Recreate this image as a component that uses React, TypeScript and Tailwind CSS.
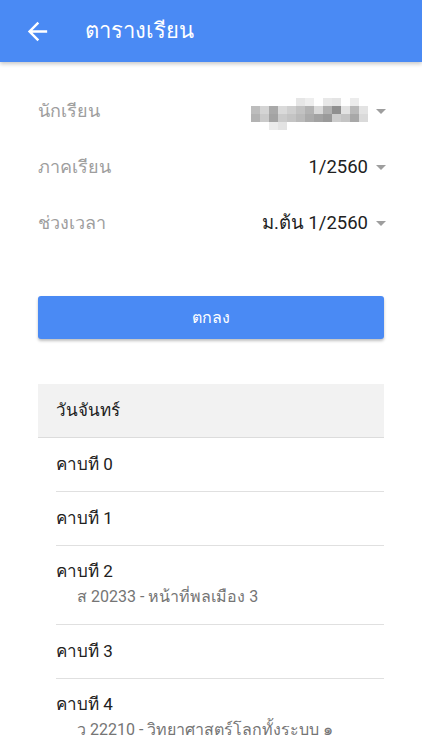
const mosaic: string[] = [
  "bg-white", "bg-white", "bg-white", "bg-white", "bg-white", "bg-[#e6e6e6]", "bg-[#eeeeee]", "bg-white", "bg-[#e8e8e8]", "bg-[#e4e4e4]", "bg-white", "bg-[#ececec]", "bg-white",
  "bg-[#bdbdbd]", "bg-[#d4d4d4]", "bg-[#a9a9a9]", "bg-[#dadada]", "bg-[#cfcfcf]", "bg-[#c2c2c2]", "bg-[#b3b3b3]", "bg-[#d9d9d9]", "bg-[#b0b0b0]", "bg-[#8f8f8f]", "bg-[#e2e2e2]", "bg-[#b9b9b9]", "bg-[#e3e3e3]",
  "bg-[#b3b3b3]", "bg-[#cacaca]", "bg-[#a3a3a3]", "bg-[#cbcbcb]", "bg-[#c4c4c4]", "bg-[#bababa]", "bg-[#ababab]", "bg-[#a2a2a2]", "bg-[#9a9a9a]", "bg-[#cccccc]", "bg-[#c4c4c4]", "bg-[#a8a8a8]", "bg-[#dadada]",
  "bg-white", "bg-white", "bg-[#ebebeb]", "bg-[#e3e3e3]", "bg-white", "bg-white", "bg-white", "bg-white", "bg-white", "bg-white", "bg-white", "bg-white", "bg-white",
];

function Caret() {
  return (
    <svg className="w-[10px] h-[5px] shrink-0" viewBox="0 0 10 5">
      <path d="M0 0h10L5 5z" fill="#9e9e9e" />
    </svg>
  );
}

function FilterRow({ label, children }: { label: string; children: React.ReactNode }) {
  return (
    <div className="h-[56px] flex items-center justify-between">
      <span className="text-[18px] leading-[24px] text-[#9e9e9e]">{label}</span>
      <div className="flex items-center gap-[8px] -mr-[2px]">
        {children}
        <Caret />
      </div>
    </div>
  );
}

const periods: { title: string; sub?: string }[] = [
  { title: "คาบที 0" },
  { title: "คาบที 1" },
  { title: "คาบที 2", sub: "ส 20233 - หน้าที่พลเมือง 3" },
  { title: "คาบที 3" },
  { title: "คาบที 4", sub: "ว 22210 - วิทยาศาสตร์โลกทั้งระบบ ๑" },
];

export default function App() {
  return (
    <div className="w-[422px] h-[750px] overflow-hidden bg-white font-['Roboto','Noto_Sans',sans-serif]">
      <header className="relative z-10 h-[62px] bg-[#4a8af4] flex items-center shadow-[0_2px_4px_rgba(0,0,0,0.22)]">
        <svg className="ml-[23px] w-[29px] h-[29px]" viewBox="0 0 24 24" fill="white">
          <path d="M20 11H7.83l5.59-5.59L12 4l-8 8 8 8 1.41-1.41L7.83 13H20v-2z" />
        </svg>
        <h1 className="ml-[33px] text-white text-[22px] leading-[28px]">ตารางเรียน</h1>
      </header>

      <div className="px-[38px] pt-[21px]">
        <FilterRow label="นักเรียน">
          <div className="grid grid-cols-[repeat(13,9px)] grid-rows-[repeat(4,8px)] mt-[6px]">
            {mosaic.map((c, i) => (
              <div key={i} className={c} />
            ))}
          </div>
        </FilterRow>
        <FilterRow label="ภาคเรียน">
          <span className="text-[18.5px] leading-[24px] text-[#212121]">1/2560</span>
        </FilterRow>
        <FilterRow label="ช่วงเวลา">
          <span className="text-[18.5px] leading-[24px] text-[#212121]">ม.ต้น 1/2560</span>
        </FilterRow>

        <button className="mt-[45px] w-full h-[43px] rounded-[3px] bg-[#4a8af4] text-white text-[16px] shadow-[0_2px_3px_rgba(0,0,0,0.25)]">
          ตกลง
        </button>

        <div className="mt-[45px]">
          <div className="h-[54px] bg-[#f2f2f2] border-b border-[#dcdcdc] flex items-center pl-[18px] text-[17px] text-[#212121]">
            วันจันทร์
          </div>
          {periods.map((p) => (
            <div key={p.title} className="pl-[18px]">
              {p.sub ? (
                <div className="border-b border-[#e0e0e0] pt-[13px] pb-[15px]">
                  <div className="text-[17px] leading-[25px] text-[#212121]">{p.title}</div>
                  <div className="pl-[21px] text-[16px] leading-[25px] text-[#757575]">{p.sub}</div>
                </div>
              ) : (
                <div className="h-[54px] border-b border-[#e0e0e0] flex items-center text-[17px] text-[#212121]">
                  {p.title}
                </div>
              )}
            </div>
          ))}
        </div>
      </div>
    </div>
  );
}
